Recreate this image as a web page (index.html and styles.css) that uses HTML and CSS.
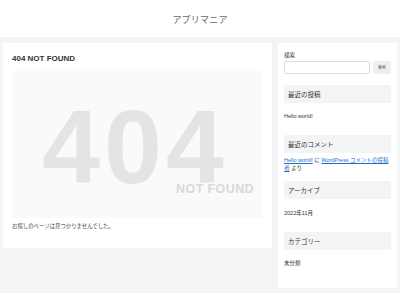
FILE: index.html
```html
<!DOCTYPE html>
<html lang="ja">
<head>
<meta charset="utf-8">
<title>ページが見つかりませんでした | アプリマニア</title>
<link rel="stylesheet" href="styles.css">
</head>
<body>
<header class="site-header">
  <div class="site-title">アプリマニア</div>
</header>
<div class="content">
  <main class="main">
    <h1 class="entry-title">404 NOT FOUND</h1>
    <div class="nf-box">
      <div class="nf-big">404</div>
      <div class="nf-small">NOT FOUND</div>
    </div>
    <p class="nf-text">お探しのページは見つかりませんでした。</p>
  </main>
  <aside class="sidebar">
    <div class="search-label">検索</div>
    <form class="search-form">
      <input class="search-input" type="text">
      <button class="search-btn" type="button">検索</button>
    </form>
    <div class="widget w-posts">
      <h3 class="widget-title">最近の投稿</h3>
      <div class="widget-body">Hello world!</div>
    </div>
    <div class="widget w-comments">
      <h3 class="widget-title">最近のコメント</h3>
      <div class="widget-body"><a href="#">Hello world!</a> に <a href="#">WordPress コメントの投稿者</a> より</div>
    </div>
    <div class="widget w-archive">
      <h3 class="widget-title">アーカイブ</h3>
      <div class="widget-body">2022年11月</div>
    </div>
    <div class="widget w-cat">
      <h3 class="widget-title">カテゴリー</h3>
      <div class="widget-body">未分類</div>
    </div>
  </aside>
</div>
<footer class="site-footer"></footer>
</body>
</html>
```
FILE: styles.css
```css
* { box-sizing: border-box; }
html, body {
  margin: 0;
  padding: 0;
  background: #fff;
  color: #333;
  font-family: "Liberation Sans", "Noto Sans CJK JP", sans-serif;
}
.site-header {
  height: 37px;
  display: flex;
  align-items: center;
  justify-content: center;
  background: #fff;
}
.site-title {
  font-family: "Noto Sans CJK JP", sans-serif;
  font-size: 9px;
  line-height: 12px;
  color: #666;
  letter-spacing: 0.2px;
  padding-top: 2px;
}
.content {
  background: #f3f4f5;
  display: flex;
  align-items: flex-start;
  gap: 6px;
  padding: 6px 3px 5px;
}
.main {
  width: 269px;
  background: #fff;
  padding: 10px 9px 18px;
}
.entry-title {
  margin: 0;
  font-size: 8px;
  line-height: 12px;
  font-weight: bold;
  color: #333;
}
.nf-box {
  margin-top: 6px;
  height: 147px;
  background: #fafafa;
  padding-top: 36px;
  padding-right: 9px;
}
.nf-big {
  font-size: 104px;
  line-height: 80px;
  font-weight: bold;
  color: #e4e4e4;
  text-align: center;
  letter-spacing: 4px;
  padding-left: 4px;
}
.nf-small {
  margin-top: -5px;
  font-size: 12.5px;
  line-height: 14px;
  font-weight: bold;
  color: #d9d9d9;
  text-align: right;
  letter-spacing: 0.4px;
}
.nf-text {
  margin: 4px 0 0;
  font-family: "Noto Sans CJK JP", sans-serif;
  font-size: 5.4px;
  line-height: 8px;
  color: #444;
}
.sidebar {
  width: 119px;
  background: #fff;
  padding: 8px 6px 21px;
  font-size: 5.5px;
  line-height: 8px;
}
.search-label {
  font-family: "Noto Sans CJK JP", sans-serif;
  font-size: 5.5px;
  line-height: 8px;
}
.search-form {
  margin: 2px 0 0;
  display: flex;
  gap: 3px;
}
.search-input {
  width: 86px;
  height: 13px;
  margin: 0;
  padding: 0;
  border: 1px solid #ddd;
  border-radius: 2px;
  background: #fff;
}
.search-btn {
  width: 19px;
  height: 13px;
  margin: 0;
  padding: 0;
  border: 0;
  border-radius: 2px;
  background: #efefef;
  color: #555;
  font-family: "Noto Sans CJK JP", sans-serif;
  font-size: 4px;
  line-height: 13px;
}
.widget-title {
  margin: 0;
  height: 18px;
  background: #f3f4f5;
  padding-left: 4px;
  font-family: "Noto Sans CJK JP", sans-serif;
  font-size: 6.5px;
  line-height: 18px;
  font-weight: normal;
  color: #333;
}
.widget-body {
  font-family: "Liberation Sans", "Noto Sans CJK JP", sans-serif;
  font-size: 5.5px;
  line-height: 8px;
}
.widget-body a {
  color: #1a6fd0;
  text-decoration: underline;
}
.w-posts { margin-top: 11px; }
.w-posts .widget-body { margin-top: 9px; }
.w-comments { margin-top: 15px; }
.w-comments .widget-body { margin-top: 3px; }
.w-archive { margin-top: 9px; }
.w-archive .widget-body { margin-top: 10px; }
.w-cat { margin-top: 15px; }
.w-cat .widget-body { margin-top: 9px; }
.site-footer {
  height: 10px;
  background: #fff;
}
```
